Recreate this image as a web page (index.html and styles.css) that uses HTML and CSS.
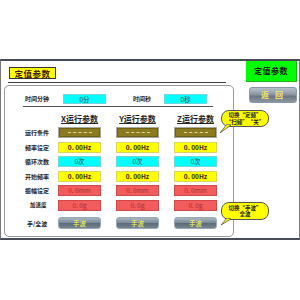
FILE: index.html
```html
<!DOCTYPE html>
<html>
<head>
<meta charset="utf-8">
<link rel="stylesheet" href="styles.css">
</head>
<body>
<div class="top"></div>
<div class="frame">
  <div class="left">
    <div class="title">定值参数</div>
    <div class="rule"></div>
    <div class="panel">
      <div class="time-row">
        <span class="tlabel">时间分钟</span><span class="box cyan">0分</span>
        <span class="tlabel t2">时间秒</span><span class="box cyan">0秒</span>
      </div>
      <div class="sep"></div>
      <div class="row head">
        <span class="label"></span>
        <div class="cells">
          <span class="hcell">X运行参数</span>
          <span class="hcell">Y运行参数</span>
          <span class="hcell">Z运行参数</span>
        </div>
      </div>
      <div class="row first">
        <span class="label">运行条件</span>
        <div class="cells">
          <span class="box olive"><i class="dash"></i></span>
          <span class="box olive"><i class="dash"></i></span>
          <span class="box olive"><i class="dash"></i></span>
        </div>
      </div>
      <div class="row">
        <span class="label">频率设定</span>
        <div class="cells">
          <span class="box yellow">0. 00Hz</span>
          <span class="box yellow">0. 00Hz</span>
          <span class="box yellow">0. 00Hz</span>
        </div>
      </div>
      <div class="row">
        <span class="label">循环次数</span>
        <div class="cells">
          <span class="box cyan">0次</span>
          <span class="box cyan">0次</span>
          <span class="box cyan">0次</span>
        </div>
      </div>
      <div class="row">
        <span class="label">开始频率</span>
        <div class="cells">
          <span class="box yellow">0. 00Hz</span>
          <span class="box yellow">0. 00Hz</span>
          <span class="box yellow">0. 00Hz</span>
        </div>
      </div>
      <div class="row">
        <span class="label">振幅设定</span>
        <div class="cells">
          <span class="box red">0. 0mm</span>
          <span class="box red">0. 0mm</span>
          <span class="box red">0. 0mm</span>
        </div>
      </div>
      <div class="row">
        <span class="label small">加速度</span>
        <div class="cells">
          <span class="box red">0. 0g</span>
          <span class="box red">0. 0g</span>
          <span class="box red">0. 0g</span>
        </div>
      </div>
      <div class="row btnrow">
        <span class="label">手/全波</span>
        <div class="cells">
          <span class="wave">手波</span>
          <span class="wave">手波</span>
          <span class="wave">手波</span>
        </div>
      </div>
    </div>
  </div>
  <div class="right">
    <div class="green">定值参数</div>
    <div class="back">返 回</div>
  </div>
  <div class="bubble b1">
    <svg class="tail" width="14" height="14" viewBox="0 0 14 14"><path d="M7 0 L0 9 L11 1 Z" fill="#ffff00" stroke="#555" stroke-width="0.8" stroke-linejoin="round"/></svg>
    <span>切换“定频”</span><span>“扫频”“关”</span>
  </div>
  <div class="bubble b2">
    <svg class="tail" width="14" height="14" viewBox="0 0 14 14"><path d="M7 0 L1 7 L11 1 Z" fill="#ffff00" stroke="#555" stroke-width="0.8" stroke-linejoin="round"/></svg>
    <span>切换“手波”</span><span>全波</span>
  </div>
</div>
</body>
</html>
```

FILE: styles.css
```css
html, body {
  margin: 0;
  padding: 0;
  background: #fff;
  width: 300px;
  height: 300px;
  overflow: hidden;
  font-family: "Noto Sans CJK SC", "DejaVu Sans", sans-serif;
  color: #222;
}
.top { height: 59px; }
.frame {
  position: relative;
  box-sizing: border-box;
  width: 300px;
  height: 181px;
  border-top: 2px solid #474c58;
  border-bottom: 2px solid #474c58;
  border-left: 1px solid #777;
  border-right: 1px solid #777;
  display: flex;
}
.left {
  width: 245px;
  display: flex;
  flex-direction: column;
}
.title {
  margin: 6px 0 0 8px;
  width: 47px;
  height: 12px;
  box-sizing: border-box;
  background: #ffff00;
  border: 1px solid #333;
  font-size: 8.5px;
  font-weight: 700;
  line-height: 10px;
  text-align: center;
  letter-spacing: 0.5px;
  color: #3a1a00;
}
.rule {
  margin: 3px 0 0 7px;
  width: 218px;
  height: 1px;
  background: #3c3c44;
}
.panel {
  margin: 2px 0 0 3px;
  width: 230px;
  height: 152px;
  box-sizing: border-box;
  border: 1px solid #9a9a9a;
  border-radius: 5px;
  display: flex;
  flex-direction: column;
}
.time-row {
  margin: 8px 0 0 20px;
  height: 10px;
  display: flex;
  align-items: center;
}
.tlabel {
  width: 38px;
  font-size: 6px;
  font-weight: 700;
  line-height: 10px;
}
.tlabel.t2 {
  margin-left: 27px;
  width: 31px;
}
.time-row .box { height: 10px; line-height: 8px; }
.sep {
  margin: 2px 0 0 18px;
  width: 190px;
  height: 1px;
  background: #555;
}
.row {
  margin-top: 3.5px;
  height: 11px;
  display: flex;
  align-items: center;
  padding-left: 20px;
}
.row.head { margin-top: 6px; }
.row.first { margin-top: 3px; }
.row.btnrow { margin-top: 6.5px; height: 12px; }
.label {
  width: 33px;
  font-size: 6px;
  font-weight: 700;
  line-height: 11px;
  white-space: nowrap;
}
.label.small { font-size: 5.5px; padding-left: 5px; box-sizing: border-box; }
.btnrow .label { padding-left: 2px; box-sizing: border-box; }
.cells {
  display: flex;
  gap: 15px;
}
.hcell {
  width: 43px;
  text-align: center;
  font-size: 8px;
  font-weight: 700;
  line-height: 11px;
  text-decoration: underline;
  text-underline-offset: 1px;
  white-space: nowrap;
  color: #222;
}
.box {
  display: flex;
  align-items: center;
  justify-content: center;
  width: 43px;
  height: 11px;
  box-sizing: border-box;
  font-size: 6.5px;
  line-height: 9px;
  white-space: nowrap;
  color: #333;
}
.yellow { background: #ffff00; border: 1px solid #d8d860; color: #3a2a08; font-weight: 700; }
.cyan { background: #00ffff; border: 1px solid #70d8d8; color: #444; }
.red { background: #f25c5c; border: 1px solid #d04848; color: #b02828; }
.olive {
  background: #8b7b1e;
  border: 1px solid #a8a8a0;
  box-shadow: inset 0 0 0 1px #6e6218;
}
.dash {
  display: block;
  width: 24px;
  height: 0;
  border-top: 1px dashed #e0d8a8;
}
.wave {
  display: flex;
  align-items: center;
  justify-content: center;
  width: 43px;
  height: 12px;
  box-sizing: border-box;
  border-radius: 3px;
  border: 1px solid #9aa8b4;
  background: linear-gradient(#a8b6c2 0%, #7c8c9a 45%, #5d6c7a 55%, #75848f 100%);
  color: #ffff50;
  font-size: 6.5px;
  line-height: 10px;
}
.right {
  width: 51px;
  display: flex;
  flex-direction: column;
}
.green {
  width: 51px;
  height: 21px;
  box-sizing: border-box;
  background: #00ff00;
  border-right: 1px solid #22aa22;
  border-bottom: 1px solid #22aa22;
  font-size: 8px;
  font-weight: 700;
  line-height: 20px;
  text-align: center;
  letter-spacing: 0.5px;
  color: #111;
}
.back {
  margin: 5px 0 0 3px;
  width: 48px;
  height: 16px;
  box-sizing: border-box;
  border-radius: 3px;
  border: 1px solid #8a96a2;
  background: linear-gradient(#b8c2cc 0%, #8c98a6 45%, #6a7684 60%, #8a96a2 100%);
  color: #f0e860;
  font-size: 8px;
  font-weight: 700;
  line-height: 14px;
  text-align: center;
  letter-spacing: 2px;
}
.bubble {
  position: absolute;
  left: 220px;
  width: 48px;
  box-sizing: border-box;
  background: #ffff00;
  border: 1px solid #555;
  border-radius: 8px;
  display: flex;
  flex-direction: column;
  align-items: center;
  justify-content: center;
  font-size: 5.5px;
  line-height: 6.5px;
  font-weight: 700;
  color: #222;
  white-space: nowrap;
}
.b1 { top: 49px; height: 17px; }
.b2 { top: 141px; height: 18px; }
.tail {
  position: absolute;
  left: -2px;
  top: 13px;
}
.b2 .tail { top: 15px; }
```
